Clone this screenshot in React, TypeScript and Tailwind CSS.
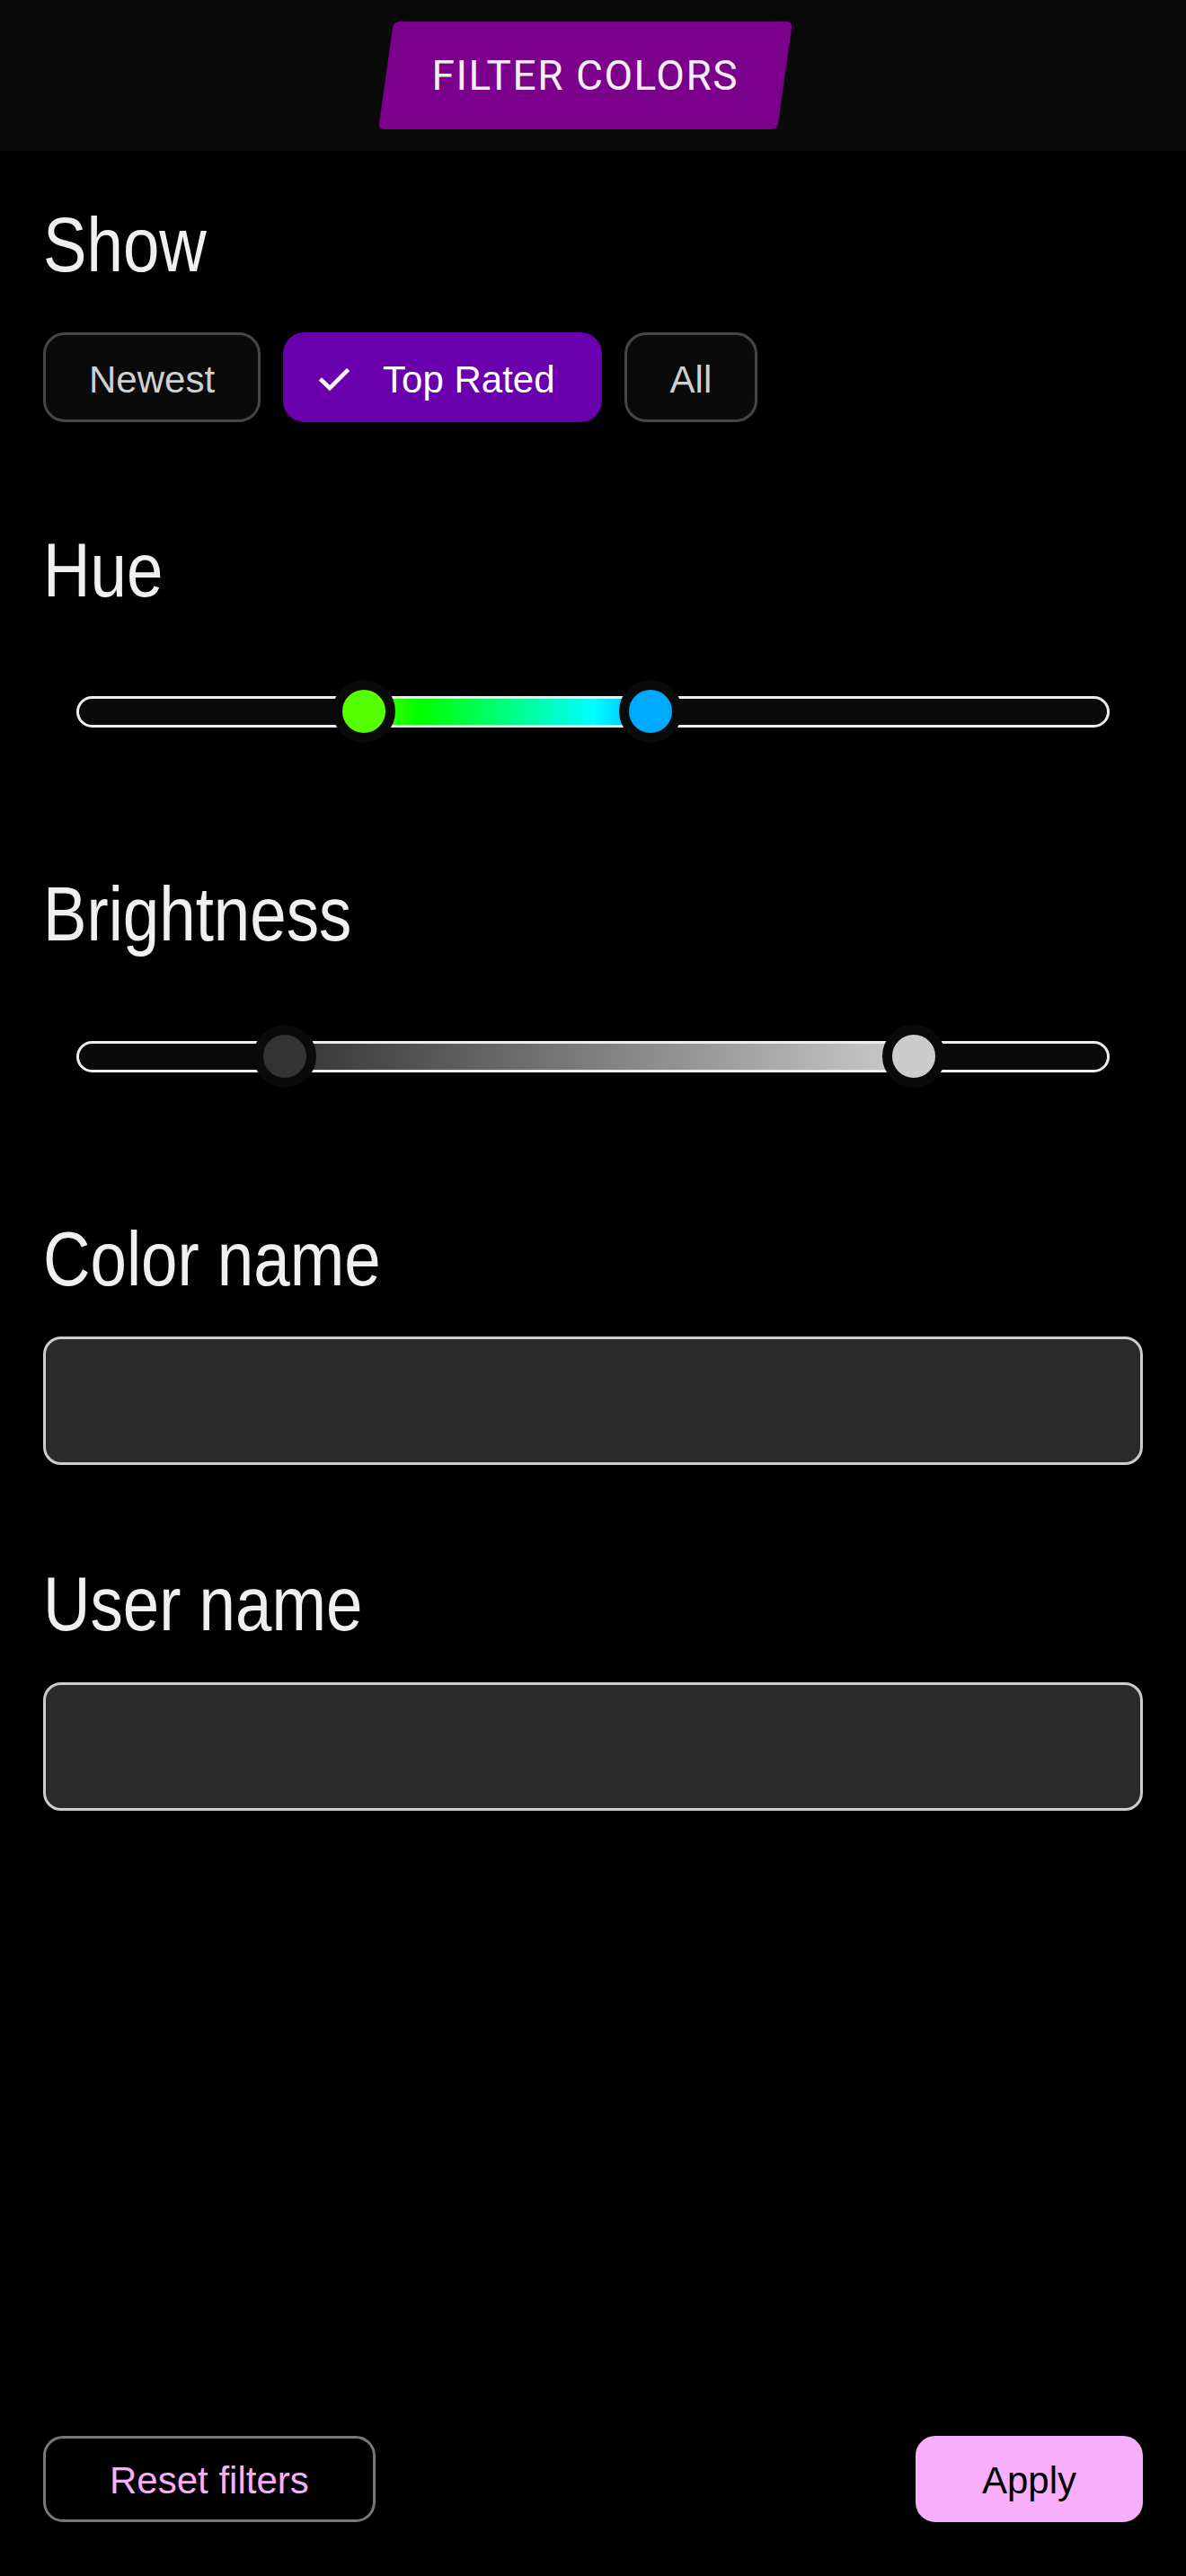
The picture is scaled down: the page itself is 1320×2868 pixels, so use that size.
import React, { useState } from 'react';

type Range = { from: number; to: number };

// No narrow face installed, so Arial metrics squeezed to Arial Narrow width
const Label: React.FC<{ children: React.ReactNode; className?: string }> = ({ children, className = '' }) => (
  <h2
    style={{ fontFamily: '"Liberation Sans", Arial, sans-serif' }}
    className={`text-[86px] leading-[100px] text-[#f0f0f0] font-normal ${className}`}
  >
    <span className="inline-block origin-left scale-x-[0.845] whitespace-nowrap">{children}</span>
  </h2>
);

const RangeSlider: React.FC<{
  range: Range;
  fill: string;
  fromColor: string;
  toColor: string;
  className?: string;
}> = ({ range, fill, fromColor, toColor, className = '' }) => (
  <div className={`mx-[37px] h-[70px] flex items-center ${className}`}>
    <div className="relative w-full h-[35px] rounded-full border-[3px] border-[#eeeeee] bg-[#0a0a0a]">
      {/* selected part of the track */}
      <div
        className="absolute top-0 bottom-0"
        style={{ left: `${range.from}%`, right: `${100 - range.to}%`, background: fill }}
      />
      {[{ pos: range.from, color: fromColor }, { pos: range.to, color: toColor }].map((t, i) => (
        <div
          key={i}
          className="absolute top-1/2 -translate-x-1/2 -translate-y-1/2 w-[70px] h-[70px] rounded-full border-[11px] border-[#0a0a0a]"
          style={{ left: `${t.pos}%`, backgroundColor: t.color }}
        />
      ))}
    </div>
  </div>
);

const CheckIcon = () => (
  <svg width="34" height="26" viewBox="0 0 34 26" fill="none" stroke="white" strokeWidth={4.5} strokeLinecap="square">
    <path d="M3 13.5 L12 22 L31 3" />
  </svg>
);

const App: React.FC = () => {
  const [show, setShow] = useState<'newest' | 'top' | 'all'>('top');
  const chips: { id: 'newest' | 'top' | 'all'; label: string }[] = [
    { id: 'newest', label: 'Newest' },
    { id: 'top', label: 'Top Rated' },
    { id: 'all', label: 'All' },
  ];

  return (
    <div className="min-h-screen bg-black flex flex-col" style={{ fontFamily: '"Liberation Sans", Arial, sans-serif' }}>
      {/* header */}
      <header className="h-[168px] bg-[#0a0a0a] flex justify-center pt-[24px]">
        <div className="w-[444px] h-[120px] bg-[#7b008b] rounded-[6px] -skew-x-8 origin-top flex items-center justify-center">
          <span
            className="skew-x-8 text-[46px] leading-none tracking-[1.5px] text-[#f0f0f0] uppercase"
            style={{ fontFamily: 'Roboto, "Liberation Sans", sans-serif' }}
          >
            Filter colors
          </span>
        </div>
      </header>

      <main className="px-12 flex flex-col">
        <Label className="mt-[54px]">Show</Label>
        <div className="mt-[48px] flex gap-[25px]">
          {chips.map((c) => {
            const active = show === c.id;
            return (
              <button
                key={c.id}
                onClick={() => setShow(c.id)}
                className={`h-[100px] pt-[6px] rounded-[24px] border-[3px] flex items-center text-[42px] leading-none ${
                  active
                    ? 'bg-[#6a00ad] border-[#6a00ad] text-white pl-[37px] pr-[49px] gap-[37px]'
                    : 'bg-[#0a0a0a] border-[#464646] text-[#d0d0d0] px-[48px]'
                }`}
              >
                {active && <CheckIcon />}
                {c.label}
              </button>
            );
          })}
        </div>

        <Label className="mt-[114px]">Hue</Label>
        <RangeSlider
          className="mt-[73px]"
          range={{ from: 27.7, to: 55.6 }}
          fill="linear-gradient(to right, #55ff00 0%, #00ff00 20%, #00ff80 50%, #00ffff 80%, #00aaff 100%)"
          fromColor="#55ff00"
          toColor="#00aaff"
        />

        <Label className="mt-[140px]">Brightness</Label>
        <RangeSlider
          className="mt-[74px]"
          range={{ from: 20, to: 81.2 }}
          fill="linear-gradient(to right, #333333, #cccccc)"
          fromColor="#333333"
          toColor="#cccccc"
        />

        <Label className="mt-[140px]">Color name</Label>
        <input
          type="text"
          className="mt-[37px] h-[143px] rounded-[20px] border-[3px] border-[#cccccc] bg-[#2a2a2a] px-8 text-[42px] text-white outline-none"
        />

        <Label className="mt-[104px]">User name</Label>
        <input
          type="text"
          className="mt-[38px] h-[143px] rounded-[20px] border-[3px] border-[#cccccc] bg-[#2a2a2a] px-8 text-[42px] text-white outline-none"
        />
      </main>

      <footer className="mt-auto px-12 pb-[60px] flex justify-between items-center">
        <button className="h-[96px] pt-[4px] px-[71px] rounded-[22px] border-[3px] border-[#777777] text-[42px] leading-none text-[#f7aefb]">
          Reset filters
        </button>
        <button className="h-[96px] pt-[4px] px-[71px] rounded-[22px] border-[3px] border-[#f7aefb] bg-[#f7aefb] text-[42px] leading-none text-black">
          Apply
        </button>
      </footer>
    </div>
  );
};

export default App;
